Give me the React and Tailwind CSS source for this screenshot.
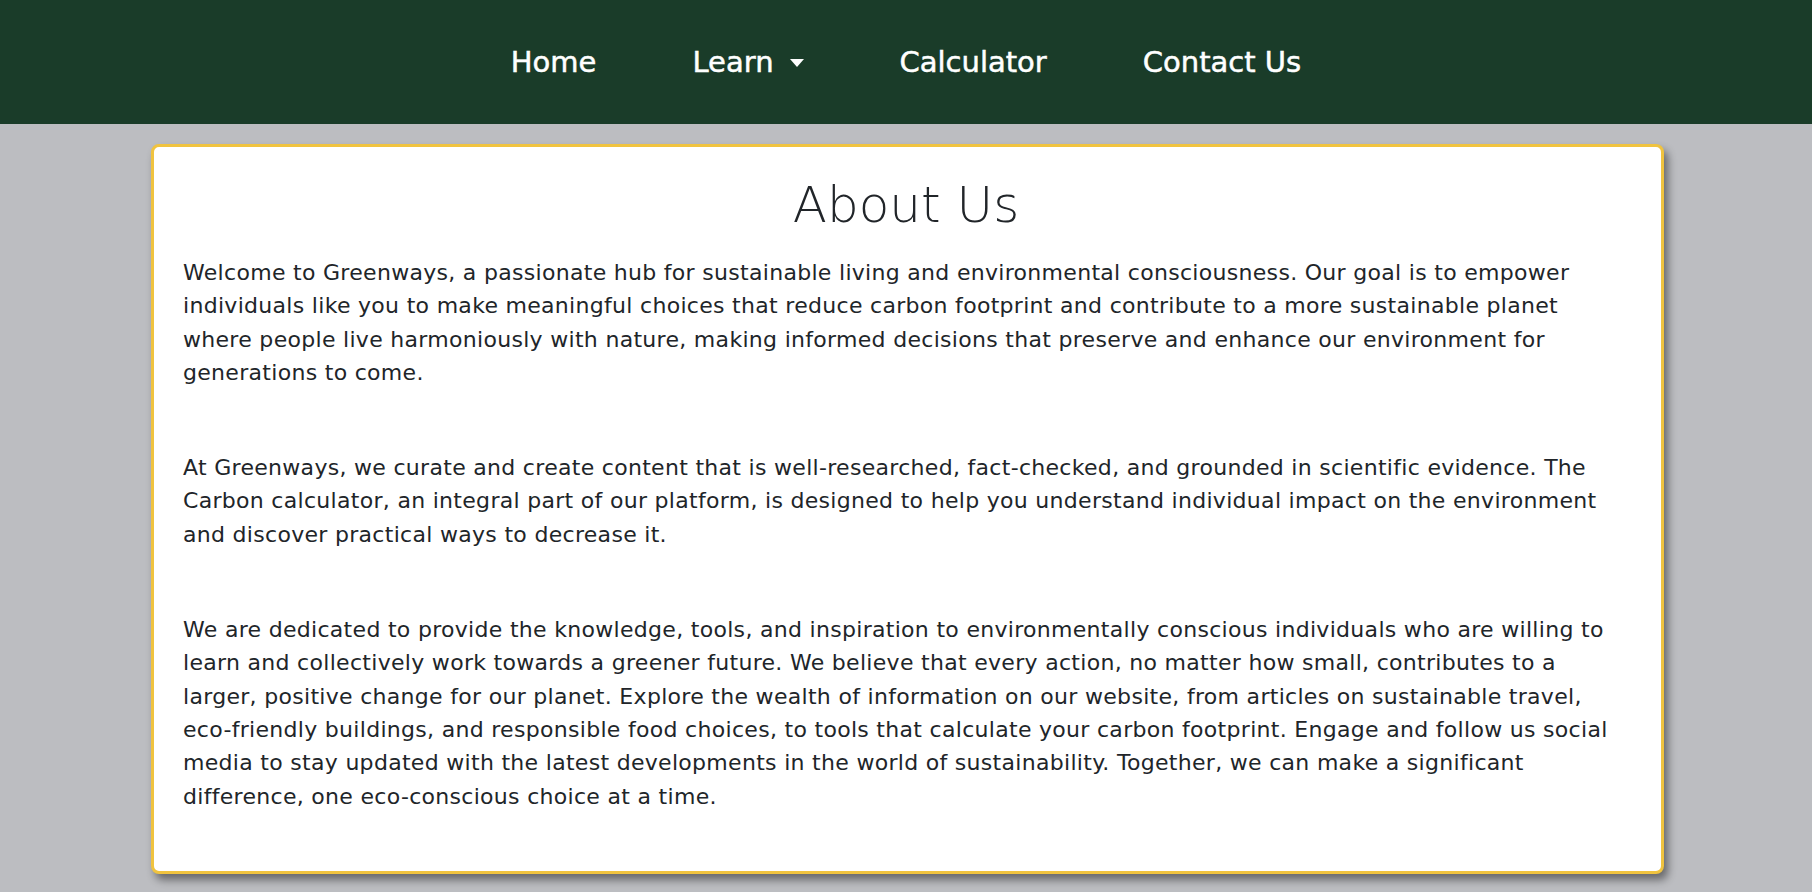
import React from 'react';

const navItems = ['Home', 'Learn', 'Calculator', 'Contact Us'];

const paragraphs = [
    'Welcome to Greenways, a passionate hub for sustainable living and environmental consciousness. Our goal is to empower individuals like you to make meaningful choices that reduce carbon footprint and contribute to a more sustainable planet where people live harmoniously with nature, making informed decisions that preserve and enhance our environment for generations to come.',
    'At Greenways, we curate and create content that is well-researched, fact-checked, and grounded in scientific evidence. The Carbon calculator, an integral part of our platform, is designed to help you understand individual impact on the environment and discover practical ways to decrease it.',
    'We are dedicated to provide the knowledge, tools, and inspiration to environmentally conscious individuals who are willing to learn and collectively work towards a greener future. We believe that every action, no matter how small, contributes to a larger, positive change for our planet. Explore the wealth of information on our website, from articles on sustainable travel, eco-friendly buildings, and responsible food choices, to tools that calculate your carbon footprint. Engage and follow us social media to stay updated with the latest developments in the world of sustainability. Together, we can make a significant difference, one eco-conscious choice at a time.'
];

const App = () => {
    return (
        <div className="min-h-[892px] bg-[#bcbdc1] font-['DejaVu_Sans',sans-serif] text-[#212529]">
            {/* top nav */}
            <nav className="h-[124px] bg-[#1a3c29] flex items-center justify-center">
                <ul className="flex items-center">
                    {navItems.map((item) => (
                        <li key={item} className="px-[48px] flex items-center text-white text-[29px] leading-none [-webkit-text-stroke:0.5px_white]">
                            <span>{item}</span>
                            {item === 'Learn' && (
                                <span className="ml-[16px] mt-[2px] inline-block w-0 h-0 border-t-[8px] border-t-white border-x-[7px] border-x-transparent" />
                            )}
                        </li>
                    ))}
                </ul>
            </nav>

            <main className="pl-[151px] pr-[148px] pt-[20px] pb-[17px]">
                <div className="bg-white border-[3px] border-[#f0c33f] rounded-[8px] shadow-[4px_6px_9px_rgba(0,0,0,0.45)] pl-[29px] pr-[32px] pt-[27px] pb-[58px]">
                    <h1 className="text-center text-[50px] leading-[62px] font-extralight mb-[20px]">About Us</h1>
                    <div className="flex flex-col gap-[62px]">
                        {paragraphs.map((p, i) => (
                            <p key={i} className="text-[22px] leading-[33.3px] tracking-[0.3px]">{p}</p>
                        ))}
                    </div>
                </div>
            </main>
        </div>
    );
};

export default App;
